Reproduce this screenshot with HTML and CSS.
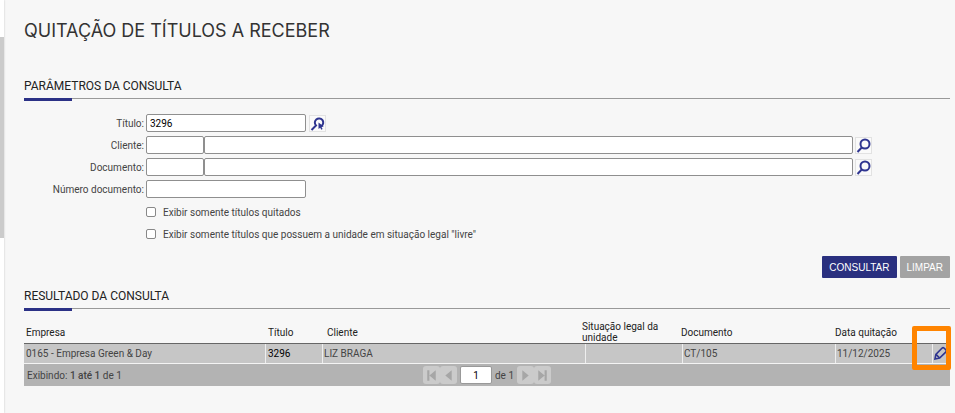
FILE: index.html
```html
<!DOCTYPE html>
<html lang="pt-BR">
<head>
  <meta charset="UTF-8" />
  <title>Quitação de Títulos a Receber</title>
  <link rel="stylesheet" href="styles.css">
</head>
<body>
  <div class="scroll-strip"><div class="scroll-thumb"></div></div>
  <main class="page">
    <h1>QUITAÇÃO DE TÍTULOS A RECEBER</h1>

    <h2 class="section-title">PARÂMETROS DA CONSULTA</h2>
    <form class="filters" onsubmit="return false">
      <div class="row">
        <label for="titulo">Título:</label>
        <input type="text" id="titulo" class="medium" value="3296" />
        <button type="button" class="lookup" aria-label="Buscar título">
          <svg viewBox="0 0 15 15"><path d="M11.500 10A4.200 4.200 0 1 0 6 9.500L1.500 14"/><path class="solid" d="M8.500 6.500v6.500l1.700-1.300 1.200 2 1.200-.7-1.100-2 2.200-.6z"/></svg>
        </button>
      </div>
      <div class="row">
        <label for="cliente">Cliente:</label>
        <input type="text" id="cliente" class="short" />
        <input type="text" class="long" aria-label="Nome do cliente" />
        <button type="button" class="lookup" aria-label="Buscar cliente">
          <svg viewBox="0 0 15 15"><circle cx="9" cy="6" r="4.500"/><path d="M6 9.200L1.500 14"/></svg>
        </button>
      </div>
      <div class="row">
        <label for="documento">Documento:</label>
        <input type="text" id="documento" class="short" />
        <input type="text" class="long" aria-label="Descrição do documento" />
        <button type="button" class="lookup" aria-label="Buscar documento">
          <svg viewBox="0 0 15 15"><circle cx="9" cy="6" r="4.500"/><path d="M6 9.200L1.500 14"/></svg>
        </button>
      </div>
      <div class="row">
        <label for="numero">Número documento:</label>
        <input type="text" id="numero" class="medium" />
      </div>
      <div class="checks">
        <div class="row check">
          <input type="checkbox" id="quitados" />
          <label for="quitados">Exibir somente títulos quitados</label>
        </div>
        <div class="row check">
          <input type="checkbox" id="livre" />
          <label for="livre">Exibir somente títulos que possuem a unidade em situação legal "livre"</label>
        </div>
      </div>
      <div class="actions">
        <button type="submit" class="btn">CONSULTAR</button>
        <button type="reset" class="btn secondary">LIMPAR</button>
      </div>
    </form>

    <h2 class="section-title">RESULTADO DA CONSULTA</h2>
    <div class="results">
      <table>
        <thead>
          <tr>
            <th>Empresa</th>
            <th>Título</th>
            <th>Cliente</th>
            <th>Situação legal da unidade</th>
            <th>Documento</th>
            <th>Data quitação</th>
          </tr>
        </thead>
        <tbody>
          <tr>
            <td>0165 - Empresa Green &amp; Day</td>
            <td class="number">3296</td>
            <td>LIZ BRAGA</td>
            <td></td>
            <td>CT/105</td>
            <td>11/12/2025</td>
            <td>
              <button type="button" class="edit" aria-label="Editar">
                <svg viewBox="0 0 14 14"><path d="M1.800 12.200l.9-4.400 5.800-5.900q.9-.7 1.800 0l1.800 1.800q.7.9 0 1.800l-5.900 5.800zM3 8l3 3"/></svg>
              </button>
            </td>
          </tr>
        </tbody>
      </table>
      <div class="pager">
        <span class="count">Exibindo: <b>1 até 1</b> de 1</span>
        <div class="pages">
          <div class="nav">
            <button type="button" aria-label="Primeira"><svg viewBox="0 0 16 16"><path d="M4 3h2v10H4zM12 3v10L6 8z"/></svg></button>
            <button type="button" aria-label="Anterior"><svg viewBox="0 0 16 16"><path d="M11 3v10L5 8z"/></svg></button>
          </div>
          <input type="text" value="1" aria-label="Página" />
          <span class="total">de 1</span>
          <div class="nav">
            <button type="button" aria-label="Próxima"><svg viewBox="0 0 16 16"><path d="M5 3v10l6-5z"/></svg></button>
            <button type="button" aria-label="Última"><svg viewBox="0 0 16 16"><path d="M4 3v10l6-5zM10 3h2v10h-2z"/></svg></button>
          </div>
        </div>
      </div>
      <div class="highlight"></div>
    </div>
  </main>
</body>
</html>
```

FILE: styles.css
```css
* { box-sizing: border-box; }
body {
  margin: 0;
  min-height: 100vh;
  display: flex;
  background: #f7f7f7;
  color: #444;
  font-family: Roboto, Arial, sans-serif;
  font-size: 10px;
}
input, button { font-family: inherit; font-size: inherit; margin: 0; }
button { cursor: pointer; }
.scroll-strip {
  width: 4px;
  padding-top: 37px;
  background: #fff;
  box-shadow: 0 0 2px #bbb;
}
.scroll-thumb { height: 201px; background: #cbcbcb; }
.page {
  flex: 1;
  min-width: 0;
  padding: 18px 5px 0 20px;
}
h1 {
  margin: 0 0 34px;
  color: #333;
  font-family: Inter, sans-serif;
  font-size: 18px;
  font-weight: 400;
  line-height: 26px;
}
.section-title {
  margin: 0;
  padding-bottom: 4px;
  border-bottom: 1px solid #999;
  position: relative;
  color: #222;
  font-size: 12px;
  font-weight: 400;
  line-height: 16px;
}
.section-title::after {
  content: "";
  position: absolute;
  left: 0;
  top: 20px;
  width: 48px;
  height: 3px;
  background: #2b3186;
}

.filters { padding-top: 15px; }
.row {
  display: flex;
  align-items: center;
  height: 18px;
  margin-bottom: 4px;
}
.row label {
  width: 120px;
  margin-right: 2px;
  text-align: right;
}
.row input[type="text"] {
  height: 18px;
  padding: 0 3px;
  border: 1px solid #8f8f8f;
  border-radius: 2px;
  background: #fff;
  color: #000;
}
.row .medium { width: 160px; }
.row .short { width: 58px; }
.row .long { flex: 1; }
.lookup {
  width: 17px;
  height: 17px;
  margin-left: 3px;
  padding: 0;
  border: 1px solid #e2e2e2;
  background: #fafafa;
}
.row .long + .lookup { margin-left: 2px; margin-right: 78px; }
.lookup svg, .edit svg {
  display: block;
  width: 100%;
  fill: none;
  stroke: #2f3590;
  stroke-width: 2;
}
.lookup .solid { fill: #2f3590; stroke: none; }
.checks { padding: 5px 0 0 122px; margin-top: -4px; }
.check input {
  appearance: none;
  width: 10px;
  height: 10px;
  margin-right: 7px;
  border: 1px solid #888;
  border-radius: 2px;
  background: #fff;
}
.check input:checked { background: #2b3186; }
.check label { width: auto; }

.actions {
  display: flex;
  justify-content: flex-end;
  gap: 3px;
  padding: 9px 0 10px;
}
.btn {
  height: 22px;
  padding: 0 7px;
  border: none;
  border-radius: 1px;
  background: #2a307f;
  color: #fff;
  font-family: "Liberation Sans", Arial, sans-serif;
}
.btn.secondary { background: #a3a3a3; }

.results { position: relative; padding-top: 10px; }
table { display: block; }
thead, tbody { display: block; }
tr { display: grid; }
thead tr {
  grid-template-columns: 242px 59px 1fr 99px 154px 117px;
  align-items: center;
  height: 25px;
  border-bottom: 1px solid #666;
}
th {
  padding: 2px 2px 0;
  color: #222;
  font-weight: 400;
  line-height: 11px;
  text-align: left;
}
tbody tr {
  grid-template-columns: 241px 57px 1fr 97px 153px 97px 18px;
  height: 20px;
  background: #c6c6c6;
  border-bottom: 1px solid #f4f4f4;
}
td {
  padding: 0 1px;
  border-left: 1px solid #eee;
  line-height: 19px;
}
td:first-child { padding-left: 2px; border-left: none; }
.number { padding-left: 2px; color: #000; }
td:last-child { padding: 2px 0; }
.edit {
  display: block;
  width: 15px;
  height: 15px;
  padding: 0;
  border: none;
  background: none;
}
.edit svg { stroke-width: 1.5; }
.pager {
  display: grid;
  grid-template-columns: 1fr auto 1fr;
  align-items: center;
  height: 22px;
  padding: 0 3px;
  background: #b3b3b3;
}
.count b { font-weight: 500; }
.pages { display: flex; align-items: center; }
.nav { display: flex; }
.nav button {
  width: 17px;
  height: 18px;
  padding: 0;
  border: none;
  border-radius: 3px;
  background: #cbcbcb;
}
.nav svg { display: block; width: 100%; fill: #a6a6a6; }
.pages input {
  width: 32px;
  height: 18px;
  margin: 0 3px;
  padding: 0;
  border: 1px solid #999;
  border-radius: 2px;
  color: #000;
  text-align: center;
}
.total { margin-right: 3px; }
.highlight {
  position: absolute;
  right: -1px;
  top: 17px;
  width: 39px;
  height: 44px;
  border: 5px solid #ff8400;
  border-radius: 2px;
  pointer-events: none;
}
```
